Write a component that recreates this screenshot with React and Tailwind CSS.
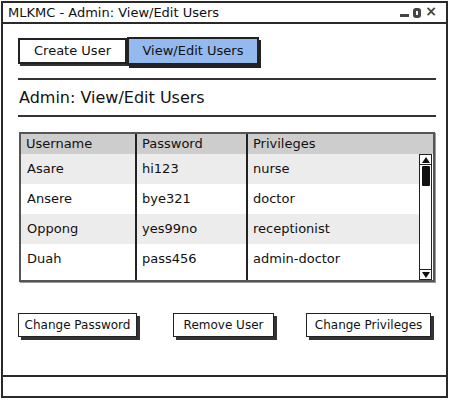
const rows = [
  { user: 'Asare', pass: 'hi123', priv: 'nurse' },
  { user: 'Ansere', pass: 'bye321', priv: 'doctor' },
  { user: 'Oppong', pass: 'yes99no', priv: 'receptionist' },
  { user: 'Duah', pass: 'pass456', priv: 'admin-doctor' },
];

const SketchButton = ({ children, className = '' }) => (
  <button
    className={`h-[24px] whitespace-nowrap border-[1.5px] border-[#222] bg-white px-[4px] text-[12px] leading-none text-[#111] shadow-[3px_3px_0_#333] ${className}`}
  >
    {children}
  </button>
);

export default function App() {
  return (
    <div className="w-[450px] h-[400px] bg-white font-['DejaVu_Sans',sans-serif] text-[#111]">
      <div className="ml-[1px] mt-[1px] flex h-[397px] w-[447px] flex-col border-2 border-[#2a2a2a]">
        {/* title bar */}
        <div className="flex h-[21px] items-center justify-between border-b-2 border-[#2a2a2a] pl-[5px] pr-[9px]">
          <span className="text-[13px]">MLKMC - Admin: View/Edit Users</span>
          <div className="flex items-center gap-[4px] text-[#333]">
            <span className="mt-[6px] h-[3px] w-[9px] bg-[#444]" />
            <span className="h-[10px] w-[8px] rounded-[3px] border-[3px] border-[#444]" />
            <span className="-mt-[3px] text-[14px] font-bold leading-none text-[#444]">×</span>
          </div>
        </div>

        <div className="flex flex-1 flex-col px-[15px]">
          {/* tabs */}
          <div className="mt-[14px] flex items-start">
            <div className="flex h-[26px] w-[109px] items-center justify-center border-2 border-[#222] bg-white text-[13px] shadow-[2px_2px_0_#333]">
              Create User
            </div>
            <div className="-mt-[1px] flex h-[28px] w-[132px] items-center justify-center border-2 border-[#222] bg-[#94b9ef] text-[13px] shadow-[2px_3px_0_#222]">
              View/Edit Users
            </div>
          </div>

          <div className="mt-[13px] h-[2px] w-[418px] bg-[#333]" />
          <div className="mt-[6px] pl-[1px] text-[16px] leading-[24px]">Admin: View/Edit Users</div>
          <div className="mt-[5px] h-[2px] w-[418px] bg-[#333]" />

          {/* table */}
          <div className="ml-[1px] mt-[15px] w-[416px] border-2 border-[#555] shadow-[1px_1px_0_#999]">
            <div className="grid h-[20px] grid-cols-[116px_111px_1fr] bg-[#cdcdcd] text-[13px]">
              <div className="flex items-center border-r-2 border-[#222] pl-[5px]">Username</div>
              <div className="flex items-center border-r-2 border-[#222] pl-[5px]">Password</div>
              <div className="flex items-center pl-[5px]">Privileges</div>
            </div>
            <div className="flex">
              <div className="flex-1">
                {rows.map((r, i) => (
                  <div
                    key={r.user}
                    className={`grid h-[30px] grid-cols-[116px_111px_1fr] text-[13px] ${i % 2 === 0 ? 'bg-[#ececec]' : 'bg-white'}`}
                  >
                    <div className="flex items-center border-r-2 border-[#222] pl-[6px]">{r.user}</div>
                    <div className="flex items-center border-r-2 border-[#222] pl-[5px]">{r.pass}</div>
                    <div className="flex items-center pl-[5px]">{r.priv}</div>
                  </div>
                ))}
                <div className="grid h-[6px] grid-cols-[116px_111px_1fr]">
                  <div className="border-r-2 border-[#222]" />
                  <div className="border-r-2 border-[#222]" />
                  <div />
                </div>
              </div>
              {/* scrollbar */}
              <div className="mr-[1px] flex w-[13px] flex-col border-[1.5px] border-[#222] bg-white">
                <div className="flex h-[10px] items-center justify-center border-b border-[#222]">
                  <svg width="8" height="6" viewBox="0 0 8 6"><path d="M4 0 L8 6 L0 6 Z" fill="#111" /></svg>
                </div>
                <div className="mx-auto mt-[1px] h-[20px] w-[8px] rounded-[1px] bg-[#111]" />
                <div className="flex-1" />
                <div className="flex h-[10px] items-center justify-center border-t border-[#222]">
                  <svg width="8" height="6" viewBox="0 0 8 6"><path d="M0 0 L8 0 L4 6 Z" fill="#111" /></svg>
                </div>
              </div>
            </div>
          </div>

          {/* action buttons */}
          <div className="mt-[31px] flex items-start">
            <SketchButton className="w-[120px]">Change Password</SketchButton>
            <SketchButton className="ml-[36px] w-[102px]">Remove User</SketchButton>
            <SketchButton className="ml-[32px] w-[126px]">Change Privileges</SketchButton>
          </div>
        </div>

        {/* status bar */}
        <div className="h-[21px] border-t-2 border-[#2a2a2a]" />
      </div>
    </div>
  );
}
